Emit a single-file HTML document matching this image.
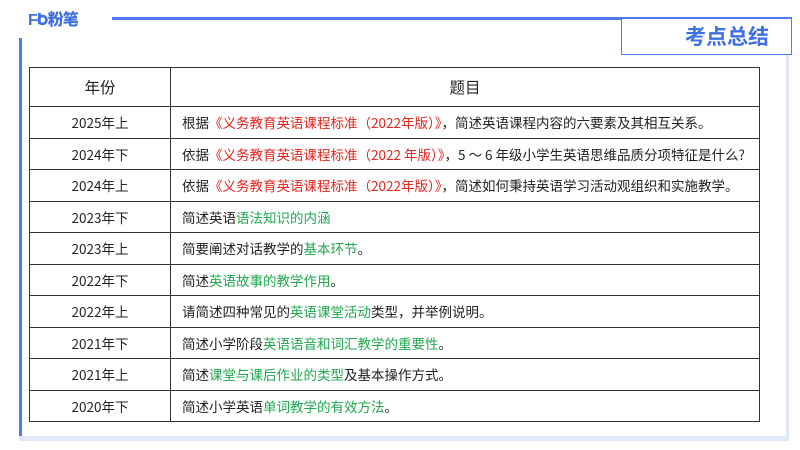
<!DOCTYPE html>
<html><head><meta charset="utf-8">
<style>
*{margin:0;padding:0;box-sizing:border-box}
body{width:800px;height:450px;background:#fff;position:relative;overflow:hidden;font-family:"Liberation Sans","Noto Sans CJK SC",sans-serif;color:#222}
.logo{position:absolute;left:28px;top:11px;font-size:16px;font-weight:900;color:#3f6fe0;letter-spacing:-1px;line-height:20px}
.topline{position:absolute;left:112px;top:17px;width:680px;height:3px;background:#4c7cf0}
.leftline{position:absolute;left:19px;top:38px;width:3px;height:402px;background:#4c7cf0}
.rightline{position:absolute;left:786px;top:54px;width:3px;height:386px;background:#dfe6fb}
.bottomline{position:absolute;left:19px;top:436px;width:770px;height:5px;background:#e3e9fb}
.titlebox{position:absolute;left:621px;top:19px;width:171px;height:36px;border:1.5px solid #4c7cf0;border-top:none;background:#fff;color:#3f6fe0;font-size:21px;font-weight:bold;text-align:right;padding-right:22px;line-height:35px;font-family:"Noto Sans CJK SC",sans-serif}
table{position:absolute;left:29px;top:67px;width:731px;border-collapse:collapse;font-size:13.5px;font-family:"Noto Sans CJK SC","Liberation Sans",sans-serif}
td,th{border:1px solid #333;height:31.5px;white-space:nowrap}
th{height:39px;font-weight:normal;font-size:15.5px}
td:first-child{text-align:center;width:141px}
td:last-child{padding-left:11px}
.r{color:#e3261f}.g{color:#21a84f}
</style></head><body>
<div class="logo"><span style="font-family:'Liberation Sans',sans-serif">F</span><svg width="11" height="14" viewBox="0 0 12 16" style="vertical-align:-1px"><circle cx="6" cy="9" r="4.5" fill="none" stroke="#3f6fe0" stroke-width="3"/><rect x="1" y="1" width="3" height="13" fill="#3f6fe0"/></svg>粉笔</div>
<div class="topline"></div>
<div class="leftline"></div>
<div class="rightline"></div>
<div class="bottomline"></div>
<div class="titlebox">考点总结</div>
<table>
<tr><th>年份</th><th>题目</th></tr>
<tr><td>2025年上</td><td>根据<span class="r">《义务教育英语课程标准（2022年版）》</span>，简述英语课程内容的六要素及其相互关系。</td></tr>
<tr><td>2024年下</td><td>依据<span class="r">《义务教育英语课程标准（2022 年版）》</span>，5 ～ 6 年级小学生英语思维品质分项特征是什么?</td></tr>
<tr><td>2024年上</td><td>依据<span class="r">《义务教育英语课程标准（2022年版）》</span>，简述如何秉持英语学习活动观组织和实施教学。</td></tr>
<tr><td>2023年下</td><td>简述英语<span class="g">语法知识的内涵</span></td></tr>
<tr><td>2023年上</td><td>简要阐述对话教学的<span class="g">基本环节</span>。</td></tr>
<tr><td>2022年下</td><td>简述<span class="g">英语故事的教学作用</span>。</td></tr>
<tr><td>2022年上</td><td>请简述四种常见的<span class="g">英语课堂活动</span>类型，并举例说明。</td></tr>
<tr><td>2021年下</td><td>简述小学阶段<span class="g">英语语音和词汇教学的重要性</span>。</td></tr>
<tr><td>2021年上</td><td>简述<span class="g">课堂与课后作业的类型</span>及基本操作方式。</td></tr>
<tr><td>2020年下</td><td>简述小学英语<span class="g">单词教学的有效方法</span>。</td></tr>
</table>
</body></html>
